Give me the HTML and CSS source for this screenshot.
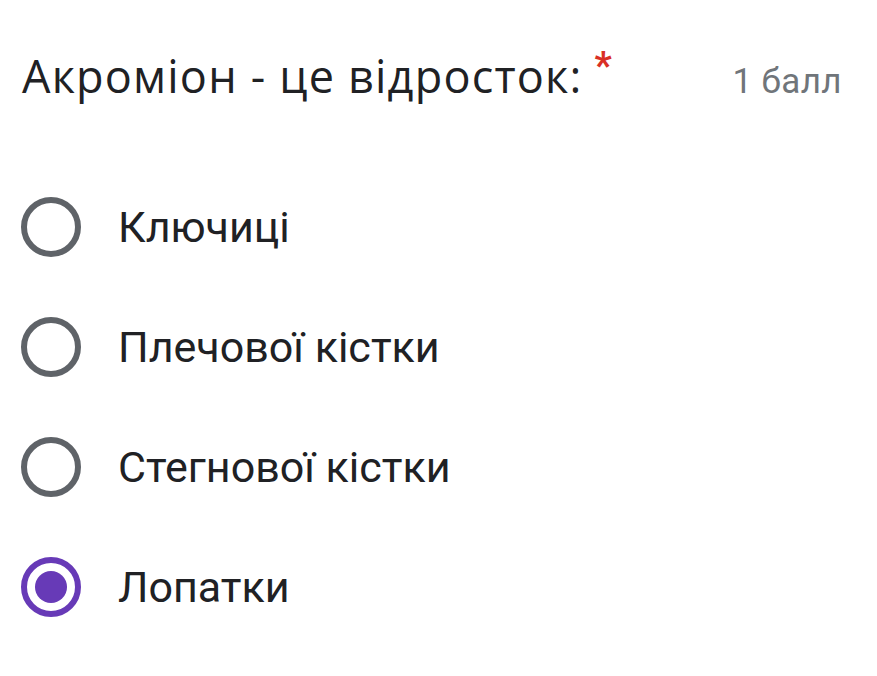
FILE: index.html
```html
<!DOCTYPE html>
<html lang="uk">
<head>
<meta charset="utf-8">
<link rel="stylesheet" href="styles.css">
</head>
<body>
<div class="card">
  <div class="header">
    <div class="title">Акроміон - це відросток:<span class="req">*</span></div>
    <div class="points">1 балл</div>
  </div>
  <div class="options">
    <label class="option"><span class="radio"></span><span class="label">Ключиці</span></label>
    <label class="option"><span class="radio"></span><span class="label">Плечової кістки</span></label>
    <label class="option"><span class="radio"></span><span class="label">Стегнової кістки</span></label>
    <label class="option checked"><span class="radio"></span><span class="label">Лопатки</span></label>
  </div>
</div>
</body>
</html>
```
FILE: styles.css
```css
html, body {
  margin: 0;
  padding: 0;
  background: #fff;
}
.card {
  width: 877px;
  height: 676px;
  box-sizing: border-box;
  padding: 46px 35px 0 22px;
}
.header {
  display: flex;
  justify-content: space-between;
  align-items: baseline;
}
.title {
  font-family: "Open Sans", sans-serif;
  font-size: 45px;
  line-height: 60px;
  color: #202124;
  letter-spacing: 1.2px;
}
.req {
  color: #d93025;
  font-family: "Roboto", sans-serif;
  font-weight: 700;
  font-size: 38px;
  margin-left: 12px;
  position: relative;
  top: -14px;
}
.points {
  font-family: "Roboto", sans-serif;
  font-size: 35px;
  letter-spacing: 0.4px;
  color: #70757a;
}
.options {
  display: flex;
  flex-direction: column;
  margin-top: 57px;
}
.option {
  display: flex;
  align-items: center;
  height: 120px;
}
.radio {
  width: 60px;
  height: 60px;
  box-sizing: border-box;
  border: 6.5px solid #5f6368;
  border-radius: 50%;
  margin-left: -1px;
  display: flex;
  align-items: center;
  justify-content: center;
}
.checked .radio {
  border-color: #673ab7;
}
.checked .radio::after {
  content: "";
  width: 32px;
  height: 32px;
  border-radius: 50%;
  background: #673ab7;
}
.label {
  margin-left: 37px;
  font-family: "Roboto", sans-serif;
  font-size: 43px;
  color: #202124;
}
```
